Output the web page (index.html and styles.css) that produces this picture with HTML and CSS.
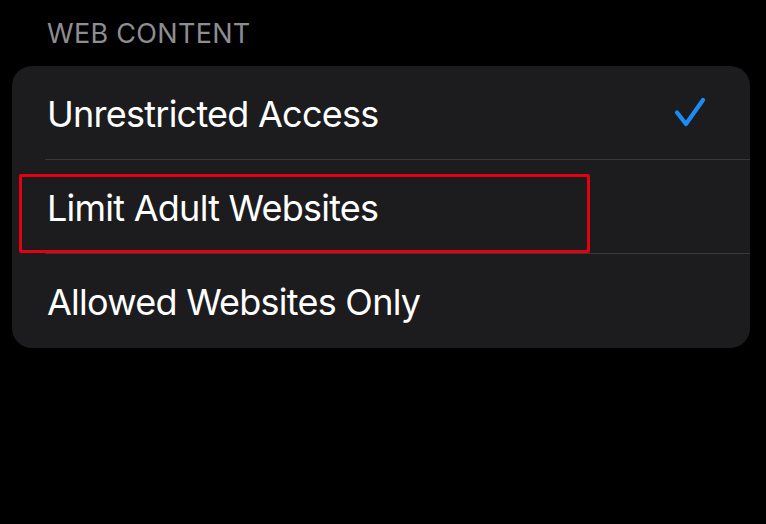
FILE: index.html
```html
<!DOCTYPE html>
<html>
<head>
<meta charset="utf-8">
<link rel="stylesheet" href="styles.css">
</head>
<body>
<div class="page">
  <div class="section-header">WEB CONTENT</div>
  <div class="card">
    <div class="row">
      <span class="label">Unrestricted Access</span>
      <svg class="check" width="36" height="34" viewBox="0 0 36 34">
        <path d="M5 15.5 L14 27 L31 3" fill="none" stroke="#1c8cf5" stroke-width="4.2" stroke-linecap="round" stroke-linejoin="round"/>
      </svg>
    </div>
    <div class="row highlighted">
      <span class="label">Limit Adult Websites</span>
      <div class="annotation"></div>
    </div>
    <div class="row last">
      <span class="label">Allowed Websites Only</span>
    </div>
  </div>
</div>
</body>
</html>
```

FILE: styles.css
```css
html, body {
  margin: 0;
  padding: 0;
  background: #000;
}
body {
  width: 766px;
  height: 524px;
  overflow: hidden;
  font-family: Inter, "Noto Sans", "Liberation Sans", sans-serif;
}
.page {
  padding: 0 16px 0 12px;
}
.section-header {
  height: 66px;
  box-sizing: border-box;
  padding: 18px 0 0 35px;
  font-size: 27px;
  line-height: 32px;
  color: #8d8d92;
  letter-spacing: 0.3px;
}
.card {
  background: #1c1c1e;
  border-radius: 20px;
  padding-left: 33px;
}
.row {
  position: relative;
  height: 94px;
  box-sizing: border-box;
  border-bottom: 1px solid #38383a;
  padding: 0 42px 0 2px;
  display: flex;
  align-items: center;
  justify-content: space-between;
}
.row.last {
  border-bottom: none;
}
.label {
  color: #fff;
  font-size: 36px;
  letter-spacing: -0.75px;
  padding-top: 2px;
}
.check {
  display: block;
  margin-top: 2px;
}
.annotation {
  position: absolute;
  left: -26px;
  top: 14px;
  width: 571px;
  height: 79px;
  box-sizing: border-box;
  border: 3px solid #e3000f;
  border-radius: 2px;
}
```
